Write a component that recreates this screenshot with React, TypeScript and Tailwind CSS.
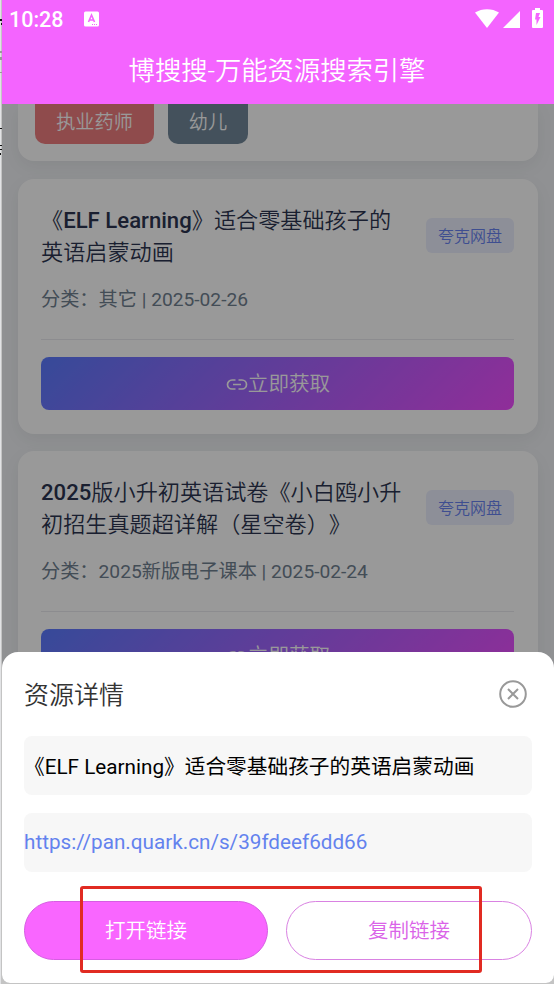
const resources = [
  {
    lead: "《",
    latin: "ELF Learning",
    rest: "》适合零基础孩子的",
    second: "英语启蒙动画",
    meta: "分类：其它 | 2025-02-26",
    source: "夸克网盘",
  },
  {
    lead: "",
    latin: "2025",
    rest: "版小升初英语试卷《小白鸥小升",
    second: "初招生真题超详解（星空卷）》",
    meta: "分类：2025新版电子课本 | 2025-02-24",
    source: "夸克网盘",
  },
];

type Resource = (typeof resources)[number];

function LinkIcon() {
  return (
    <svg className="-mt-px h-[13px] w-[22px]" viewBox="0 0 22 13" fill="none" stroke="currentColor" strokeWidth="1.7">
      <path d="M9.500 2H6a4.500 4.500 0 0 0 0 9h3.500M12.500 2H16a4.500 4.500 0 0 1 0 9h-3.500M7 6.500h8" />
    </svg>
  );
}

function StatusBar() {
  return (
    <div className="flex h-9 items-center justify-between pl-[7px] pr-[11px] text-white">
      <div className="flex items-center">
        <span className="w-[75px] pt-[3px] text-[21.5px] font-medium leading-9">10:28</span>
        <svg className="mt-px h-4 w-4" viewBox="0 0 16 16">
          <rect width="15" height="15" x="0" y="0.500" rx="1.500" fill="currentColor" />
          <path d="M4.500 11 7.500 4l3 7M5.500 9h4" fill="none" stroke="#f464ff" strokeWidth="1.600" />
          <path d="M8 13.500h1M10 13.500h1M12 13.500h1" stroke="#f464ff" />
        </svg>
      </div>
      <div className="flex items-center">
        <svg className="h-[19px] w-6" viewBox="0 0 24 19" fill="currentColor">
          <path d="M0 3.500C7-1 17-1 24 3.500L12 19Z" />
        </svg>
        <svg className="ml-1 mt-0.5 h-[17px] w-[17px]" viewBox="0 0 17 17" fill="currentColor">
          <path d="M17 0v17H0Z" />
        </svg>
        <svg className="ml-3 h-5 w-[11px]" viewBox="0 0 11 20">
          <path d="M3 0h5v2h2q1 0 1 1v16q0 1-1 1H1q-1 0-1-1V3q0-1 1-1h2Z" fill="currentColor" />
          <path d="M4 5h4L6.500 9h2L4.500 17v-5.500H3Z" fill="#f464ff" />
        </svg>
      </div>
    </div>
  );
}

function ResourceCard({ lead, latin, rest, second, meta, source }: Resource) {
  return (
    <article className="h-[255px] shrink-0 rounded-2xl bg-white pl-[23px] pr-6 pt-[25px] shadow-[0_6px_18px_rgba(0,0,0,0.06)]">
      <div className="flex items-start justify-between">
        <h2 className="w-[366px] text-[22.15px] font-[350] leading-8 text-[#2c3550] [text-spacing-trim:space-all]">
          <span className="flex whitespace-nowrap">
            {lead && <span>{lead}</span>}
            <span className="font-medium">{latin}</span>
            <span>{rest}</span>
          </span>
          <span className="block">{second}</span>
        </h2>
        <span className="mt-3.5 h-[35px] w-[88px] rounded-md bg-[#eceffe] text-center text-base font-[350] leading-[37px] text-[#6882f0]">
          {source}
        </span>
      </div>
      <p className="mt-4 text-[19.2px] font-normal leading-8 text-[#708090]">{meta}</p>
      <div className="mt-[23px] border-t border-[#eaeaee] pt-[17px]">
        <button className="flex h-[53px] w-full items-center justify-center rounded-lg bg-[linear-gradient(135deg,#5b7cff,#f04dff)] pl-px pt-0.5 text-[20.6px] font-[350] text-white">
          <LinkIcon />
          立即获取
        </button>
      </div>
    </article>
  );
}

function DetailSheet() {
  return (
    <section className="absolute inset-x-0 bottom-0 h-[331px] rounded-t-2xl bg-white px-[22px]">
      {/* Title */}
      <div className="flex h-[84px] items-center justify-between">
        <h2 className="pt-[3px] text-[25px] font-[350] text-[#333333]">资源详情</h2>
        <svg className="mr-[5px] h-7 w-7" viewBox="0 0 28 28" fill="none" stroke="#999999" strokeWidth="2">
          <circle cx="14" cy="14" r="12.800" />
          <path d="m9 9 10 10M19 9 9 19" />
        </svg>
      </div>

      {/* Resource */}
      <div className="h-[59px] rounded-lg bg-[#f7f7f7] text-[20.7px] font-normal leading-[62px] text-black">
        《ELF Learning》适合零基础孩子的英语启蒙动画
      </div>
      <div className="mt-[18px] h-[59px] rounded-lg bg-[#f7f7f7] text-[20.7px] font-normal leading-[58px] text-[#6382ee]">
        https://pan.quark.cn/s/39fdeef6dd66
      </div>

      {/* Buttons */}
      <div className="mt-[29px] flex gap-[18px] text-[20.5px] font-[350]">
        <button className="h-[59px] w-[244px] rounded-full border border-[#d65de2] bg-[#f966ff] pt-0.5 text-white">
          打开链接
        </button>
        <button className="h-[59px] w-[246px] rounded-full border border-[#d982e2] pt-0.5 text-[#da63e8]">
          复制链接
        </button>
      </div>
    </section>
  );
}

export default function App() {
  return (
    <div className="flex h-[984px] w-[554px] overflow-hidden bg-[#c4c4c4] pb-px font-[Roboto,'Noto_Sans_CJK_SC',sans-serif] font-[350]">
      {/* Sliver of the window behind the phone */}
      <svg className="h-[984px] w-0.5 shrink-0" viewBox="0 0 2 984">
        <path d="M0 0h1v984H0Z" fill="#e2e3e5" />
        <path d="M0 19h2v2H0ZM1 23h1v2H1ZM0 128h2v1H0ZM0 145h2v1H0ZM0 149h2v1H0ZM0 153h1v2H0Z" fill="#111111" />
        <path d="M0 51h2v2H0ZM0 57h2v3H0ZM0 72h2v1H0Z" fill="#999999" />
      </svg>
      <main className="relative flex flex-1 flex-col overflow-hidden rounded-b-lg bg-[#f0f2f5]">
        {/* Header */}
        <header className="relative z-10 h-[104px] shrink-0 bg-[#f464ff]">
          <StatusBar />
          <h1 className="h-[68px] pr-0.5 text-center text-[26.3px] leading-[70px] text-white">博搜搜-万能资源搜索引擎</h1>
        </header>

        {/* Results */}
        <div className="flex min-h-0 flex-1 flex-col gap-[17px] px-4">
          <div className="mb-px flex h-[57px] shrink-0 gap-3.5 rounded-b-2xl bg-white pl-[17px] text-[19.2px] text-white shadow-[0_6px_18px_rgba(0,0,0,0.06)]">
            <span className="h-10 w-[119px] rounded-b-[10px] bg-[#ee7e7f] text-center leading-[38px]">执业药师</span>
            <span className="h-10 w-20 rounded-b-[10px] bg-[#728899] text-center leading-[38px]">幼儿</span>
          </div>
          {resources.map((item) => (
            <ResourceCard key={item.meta} {...item} />
          ))}
        </div>

        <div className="absolute inset-0 bg-black/40" />
        <DetailSheet />

        {/* Highlight around the actions */}
        <div className="pointer-events-none absolute bottom-[10px] left-[78px] h-[87px] w-[402px] rounded-[3px] border-3 border-[#e12b22]" />
      </main>
    </div>
  );
}
